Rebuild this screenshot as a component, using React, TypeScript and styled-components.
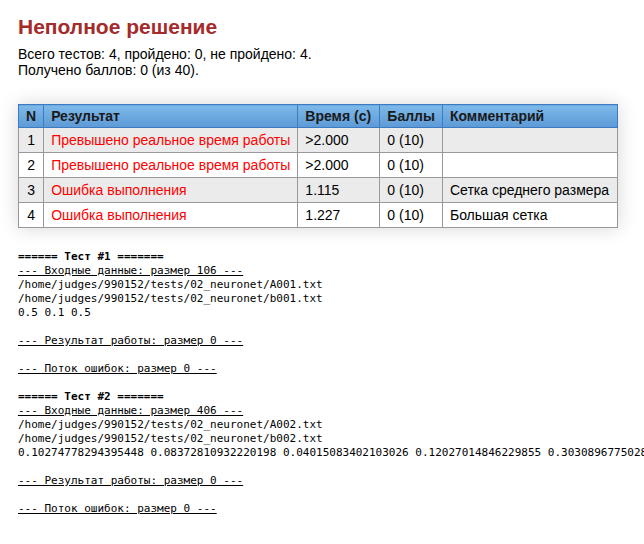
import React from "react";
import styled, { createGlobalStyle } from "styled-components";

const Global = createGlobalStyle`
  html, body { margin: 0; padding: 0; background: #ffffff; overflow: hidden; }
  body { font-family: "Liberation Sans", Arial, sans-serif; color: #000; }
`;

const Page = styled.div`
  padding: 14px 18px 20px 18px;
  width: 626px;
`;

const Title = styled.h2`
  margin: 0 0 6px 0;
  font-size: 21px;
  font-weight: bold;
  color: #a52a2a;
  line-height: 26px;
`;

const Summary = styled.div`
  font-size: 14px;
  line-height: 16px;
  margin-bottom: 26px;
`;

const Table = styled.table`
  border-collapse: collapse;
  box-shadow: 0 0 18px rgba(0, 0, 0, 0.16);
  font-size: 14px;
  margin-bottom: 22px;
`;

const Th = styled.th<{ $w: number; $center?: boolean }>`
  width: ${(p) => p.$w}px;
  box-sizing: border-box;
  height: 23px;
  padding: 0 7px;
  text-align: ${(p) => (p.$center ? "center" : "left")};
  font-weight: bold;
  color: #1a1a1a;
  background: linear-gradient(to bottom, #7db9e8 0%, #5d9ad6 100%);
  border: 1px solid #3c7ac2;
`;

const Tr = styled.tr<{ $alt: boolean }>`
  background: ${(p) => (p.$alt ? "#ebebeb" : "#ffffff")};
`;

const Td = styled.td<{ $red?: boolean; $center?: boolean }>`
  height: 25px;
  box-sizing: border-box;
  padding: 0 7px;
  border: 1px solid #999999;
  text-align: ${(p) => (p.$center ? "center" : "left")};
  color: ${(p) => (p.$red ? "#ff0000" : "#000")};
  white-space: nowrap;
`;

const Log = styled.pre`
  margin: 0;
  font-family: "DejaVu Sans Mono", "Liberation Mono", monospace;
  font-size: 11px;
  line-height: 14px;
  color: #000;
  white-space: pre;
`;

const Bold = styled.b`
  font-weight: bold;
`;

const Under = styled.u`
  text-decoration: underline;
`;

const rows = [
  { n: 1, r: "Превышено реальное время работы", t: ">2.000", b: "0 (10)", c: "" },
  { n: 2, r: "Превышено реальное время работы", t: ">2.000", b: "0 (10)", c: "" },
  { n: 3, r: "Ошибка выполнения", t: "1.115", b: "0 (10)", c: "Сетка среднего размера" },
  { n: 4, r: "Ошибка выполнения", t: "1.227", b: "0 (10)", c: "Большая сетка" },
];

const tests = [
  {
    n: 1,
    size: 106,
    lines: [
      "/home/judges/990152/tests/02_neuronet/A001.txt",
      "/home/judges/990152/tests/02_neuronet/b001.txt",
      "0.5 0.1 0.5",
    ],
  },
  {
    n: 2,
    size: 406,
    lines: [
      "/home/judges/990152/tests/02_neuronet/A002.txt",
      "/home/judges/990152/tests/02_neuronet/b002.txt",
      "0.10274778294395448 0.08372810932220198 0.04015083402103026 0.12027014846229855 0.30308967750284 0.1",
    ],
  },
];

export default function App() {
  return (
    <>
      <Global />
      <Page>
        <Title>Неполное решение</Title>
        <Summary>
          Всего тестов: 4, пройдено: 0, не пройдено: 4.
          <br />
          Получено баллов: 0 (из 40).
        </Summary>
        <Table>
          <thead>
            <tr>
              <Th $w={25} $center>N</Th>
              <Th $w={253}>Результат</Th>
              <Th $w={82}>Время (с)</Th>
              <Th $w={61}>Баллы</Th>
              <Th $w={175}>Комментарий</Th>
            </tr>
          </thead>
          <tbody>
            {rows.map((r) => (
              <Tr key={r.n} $alt={r.n % 2 === 1}>
                <Td $center>{r.n}</Td>
                <Td $red>{r.r}</Td>
                <Td>{r.t}</Td>
                <Td>{r.b}</Td>
                <Td>{r.c}</Td>
              </Tr>
            ))}
          </tbody>
        </Table>
        <Log>
          {tests.map((t) => (
            <React.Fragment key={t.n}>
              <Bold>{`====== Тест #${t.n} =======`}</Bold>
              {"\n"}
              <Under>{`--- Входные данные: размер ${t.size} ---`}</Under>
              {"\n"}
              {t.lines.join("\n")}
              {"\n\n"}
              <Under>--- Результат работы: размер 0 ---</Under>
              {"\n\n"}
              <Under>--- Поток ошибок: размер 0 ---</Under>
              {"\n\n"}
            </React.Fragment>
          ))}
        </Log>
      </Page>
    </>
  );
}
